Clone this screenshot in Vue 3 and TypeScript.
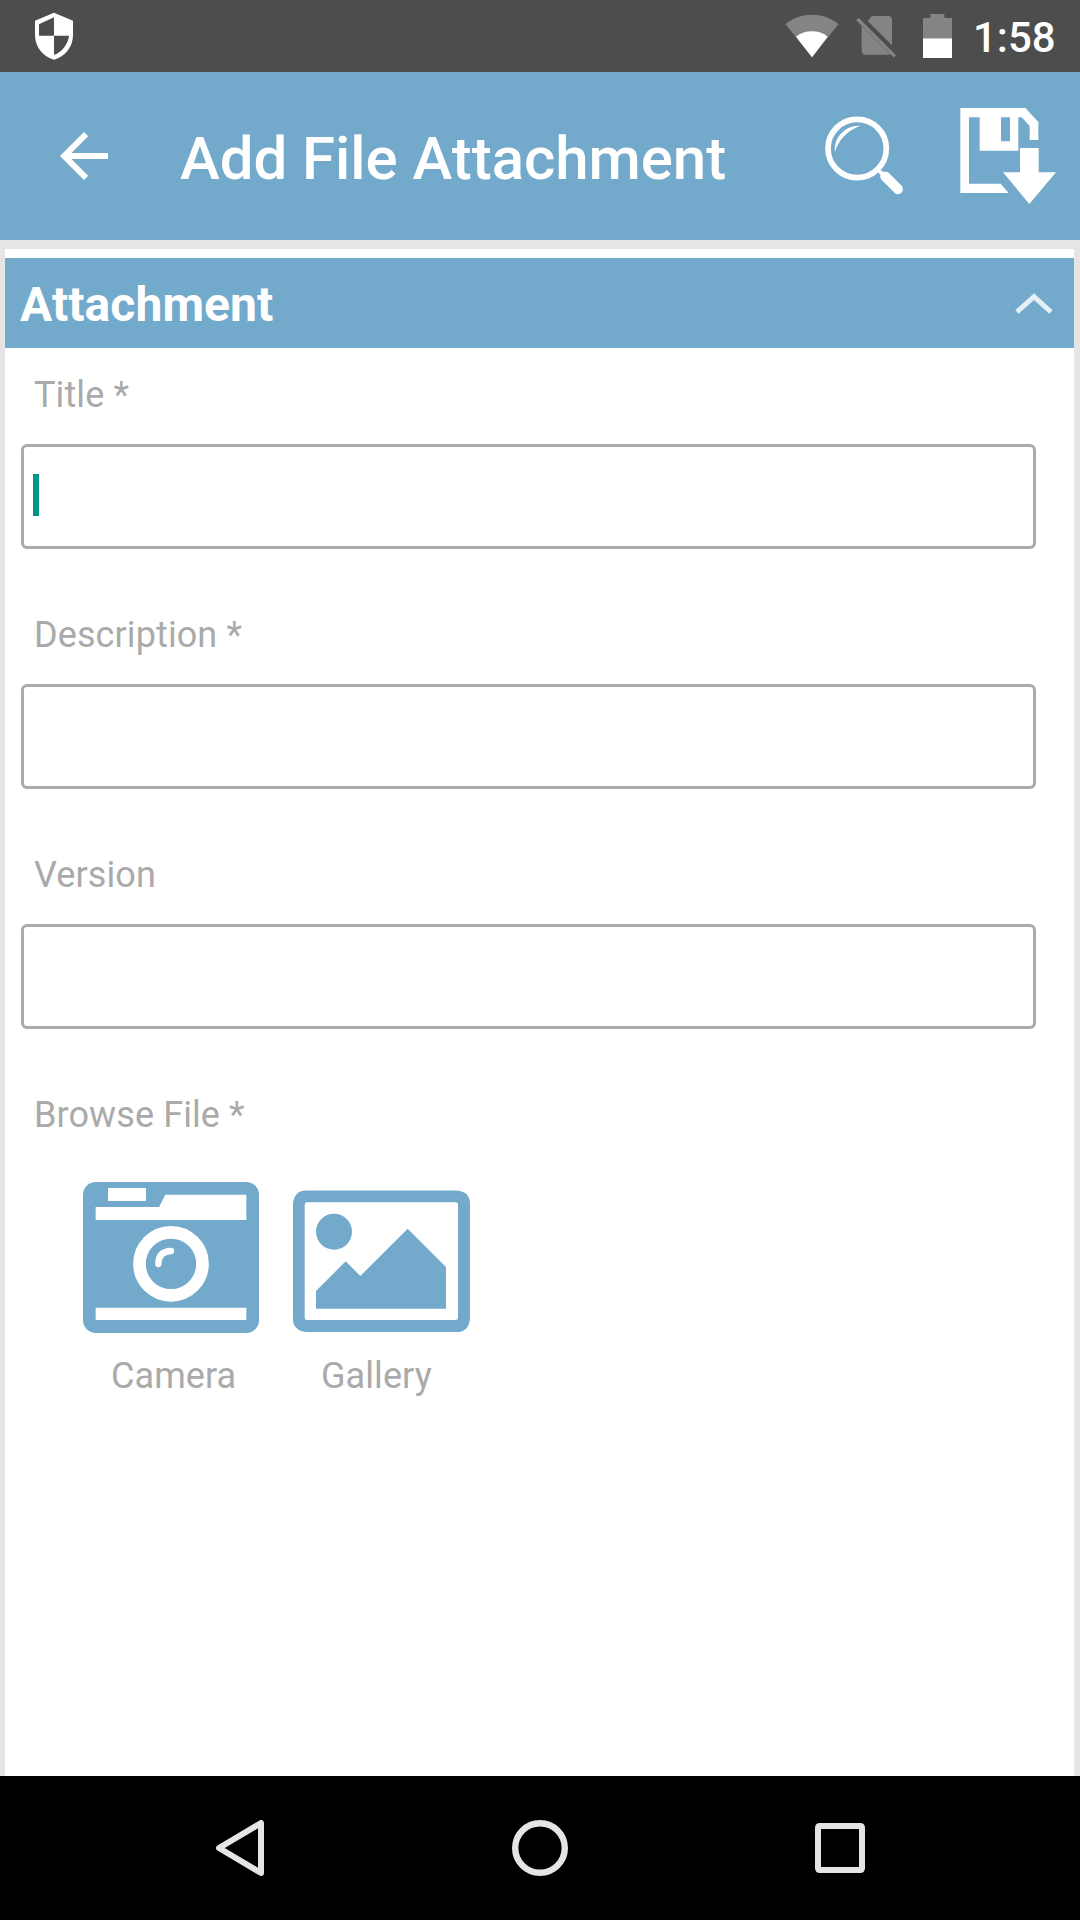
<script setup lang="ts">
import { ref } from 'vue'

interface Field {
  id: string
  label: string
  focused: boolean
}

const fields: Field[] = [
  { id: 'title', label: 'Title *', focused: true },
  { id: 'description', label: 'Description *', focused: false },
  { id: 'version', label: 'Version', focused: false },
]

const expanded = ref(true)
</script>

<template>
  <div class="screen">
    <div class="status-bar">
      <svg class="shield" width="38" height="48" viewBox="105 36 114 144">
        <path fill="#fff" fill-rule="evenodd" d="M162 38L219 62V105C219 140 195 171 162 179C129 171 105 140 105 105V62ZM117 73V107.500H162V52ZM162 107.500V165C186 157 204 133 207 107.500Z" />
      </svg>
      <div class="status-icons">
        <svg class="wifi" width="54" height="44" viewBox="74 41 162 132">
          <path fill="#848484" d="M155 171L75 71Q110 43 155 43T235 71Z" />
          <path fill="#fff" d="M155 171L107 109Q128 93 155 93T202 109Z" />
        </svg>
        <svg class="sim" width="40" height="46" viewBox="288 43 120 138">
          <path fill="#848484" d="M336 49H384Q396 49 396 61V137L323 64ZM305 78L390 163Q387 165 384 165H317Q305 165 305 153Z" />
          <path stroke="#848484" stroke-width="10" d="M292.500 58L404.500 170" />
        </svg>
        <svg class="battery" width="29" height="44" viewBox="489 42 87 132">
          <path fill="#848484" d="M511 42H553V54H576V115H489V54H511Z" />
          <path fill="#fff" d="M489 115H576V174H489Z" />
        </svg>
        <span class="clock">1:58</span>
      </div>
    </div>

    <header class="app-bar">
      <svg class="back" width="48" height="48" viewBox="0 0 24 24">
        <path fill="#fff" d="M24 10.500H5.740L14.120 2.120 12 0 0 12 12 24l2.120-2.120L5.740 13.500H24z" />
      </svg>
      <h1>Add File Attachment</h1>
      <svg class="search" width="80" height="80" viewBox="75 79.500 240 240">
        <circle cx="171.500" cy="177" r="87.500" fill="none" stroke="#fff" stroke-width="17" />
        <path fill="#fff" d="M181 109C138 106 100 142 105 188C113 156 139 125 181 109Z" />
        <path fill="#fff" d="M231 250L241 241L248 247H259Q264 248 268 252L305 289Q312 297 306 308Q297 318 286 312L246 272Q241 267 241 262V256L236 250Z" />
      </svg>
      <svg class="save" width="96" height="96" viewBox="480 54 288 288">
        <path fill="#fff" fill-rule="evenodd" d="M481 54H676L715 96V150H689V108L665 82H655V182H539V82H507V281H602L626 309H481ZM603 82V154H630V82Z" />
        <path fill="#fff" d="M660 174H716V247H768L688 342L609 247H660Z" />
      </svg>
    </header>

    <main class="page">
      <section class="card">
        <div class="section-head" @click="expanded = !expanded">
          <h2>Attachment</h2>
          <svg width="38" height="21" viewBox="705 187 114 63">
            <path d="M711 244L762 198L813 244" fill="none" stroke="#e5eff6" stroke-width="15" />
          </svg>
        </div>
        <div v-if="expanded" class="form">
          <div v-for="field in fields" :key="field.id" class="field">
            <div class="label">{{ field.label }}</div>
            <div class="input"><span v-if="field.focused" class="caret"></span></div>
          </div>
          <div class="label">Browse File *</div>
          <div class="sources">
            <div class="source">
              <svg width="176" height="151" viewBox="69 66 528 453">
                <rect x="69" y="66" width="528" height="453" rx="38" fill="#73aacc" />
                <path fill="#fff" d="M144 84H258V123H144ZM107 141H297L316 104H559V180H107ZM107 443H559V480H107Z" />
                <circle cx="333" cy="311.500" r="94.500" fill="none" stroke="#fff" stroke-width="38" />
                <path d="M295 312Q295 274 333 273" fill="none" stroke="#fff" stroke-width="19" stroke-linecap="round" />
              </svg>
              <span>Camera</span>
            </div>
            <div class="source">
              <svg width="177" height="142" viewBox="69 90 531 426">
                <path fill="#73aacc" fill-rule="evenodd" d="M109 91.500H560Q600 95 600 131V476Q596 516 560 516H109Q69 512 69 476V131Q73 91.500 109 91.500ZM111 127Q104 127 104 134V473Q104 480 111 480H557Q564 480 564 473V134Q564 127 557 127Z" />
                <circle cx="192" cy="215" r="54" fill="#73aacc" />
                <path fill="#73aacc" d="M138 393L227 304L271 348L413 206L528 321V446H138Z" />
              </svg>
              <span>Gallery</span>
            </div>
          </div>
        </div>
      </section>
    </main>

    <nav class="nav-bar">
      <svg width="48" height="56" viewBox="108 180 144 168">
        <path d="M117 264L243 189V339Z" fill="none" stroke="#e5e5e5" stroke-width="18" stroke-linejoin="round" />
      </svg>
      <svg width="56" height="56" viewBox="0 0 56 56">
        <circle cx="28" cy="28" r="24.800" fill="none" stroke="#e5e5e5" stroke-width="6.400" />
      </svg>
      <svg width="50" height="50" viewBox="0 0 50 50">
        <path fill="#e5e5e5" fill-rule="evenodd" d="M5 0H45Q50 0 50 5V45Q50 50 45 50H5Q0 50 0 45V5Q0 0 5 0ZM6 6V44H44V6Z" />
      </svg>
    </nav>
  </div>
</template>

<style>
body {
  margin: 0;
}
</style>

<style scoped>
.screen {
  width: 1080px;
  height: 1920px;
  display: flex;
  flex-direction: column;
  overflow: hidden;
  background: #e5e5e5;
  font-family: Roboto, 'Liberation Sans', sans-serif;
}

svg {
  display: block;
  flex: none;
}

h1,
h2 {
  margin: 0;
  color: #fff;
  white-space: nowrap;
}

.status-bar {
  height: 72px;
  flex: none;
  box-sizing: border-box;
  padding: 12px 25px 0 35px;
  display: flex;
  align-items: flex-start;
  justify-content: space-between;
  background: #4d4d4d;
}

.status-icons {
  display: flex;
  align-items: flex-start;
}

.wifi {
  margin: 2px 17px 0 0;
}

.sim {
  margin: 2px 27px 0 0;
}

.battery {
  margin: 2px 21px 0 0;
}

.clock {
  width: 82px;
  color: #fff;
  font-size: 42px;
  font-weight: 500;
  line-height: 51px;
  white-space: nowrap;
}

.app-bar {
  height: 168px;
  flex: none;
  box-sizing: border-box;
  padding: 0 24px 0 60px;
  display: flex;
  align-items: center;
  background: #73aacc;
}

.back {
  margin-right: 72px;
}

h1 {
  flex: 1;
  padding-top: 5px;
  font-size: 60px;
  font-weight: 500;
  line-height: 70px;
  letter-spacing: -0.05px;
}

.search {
  margin: 0 55px 0 0;
}

.page {
  flex: 1;
  padding: 9px 6px 0 5px;
  display: flex;
}

.card {
  flex: 1;
  padding-top: 9px;
  background: #fff;
}

.section-head {
  height: 90px;
  box-sizing: border-box;
  padding: 0 21px 0 15px;
  display: flex;
  align-items: center;
  justify-content: space-between;
  background: #73aacc;
}

h2 {
  padding-top: 3px;
  font-size: 48px;
  font-weight: 700;
  line-height: 56px;
  letter-spacing: 0.08px;
}

.form {
  padding: 0 38px 0 16px;
}

.field {
  margin-bottom: 39px;
}

.label {
  height: 96px;
  padding-left: 13px;
  color: #aaa;
  font-size: 36px;
  line-height: 94px;
  letter-spacing: 0.1px;
}

.input {
  height: 105px;
  box-sizing: border-box;
  padding-left: 9px;
  display: flex;
  align-items: center;
  border: 3px solid #aaa;
  border-radius: 6px;
}

.caret {
  width: 6px;
  height: 42px;
  margin-bottom: 3px;
  background: #009688;
}

.sources {
  display: flex;
  align-items: flex-end;
  gap: 34px;
  padding: 18px 0 0 62px;
}

.source {
  display: flex;
  flex-direction: column;
}

.source span {
  margin: 22px 0 0 28px;
  color: #aaa;
  font-size: 36px;
  line-height: 42px;
  letter-spacing: 0.08px;
}

.source:last-child span {
  margin-top: 23px;
}

.nav-bar {
  height: 144px;
  flex: none;
  box-sizing: border-box;
  padding: 0 215px 0 216px;
  display: flex;
  align-items: center;
  background: #000;
}

.nav-bar svg + svg {
  margin-left: 248px;
}

.nav-bar svg:last-child {
  margin-left: 247px;
}
</style>
